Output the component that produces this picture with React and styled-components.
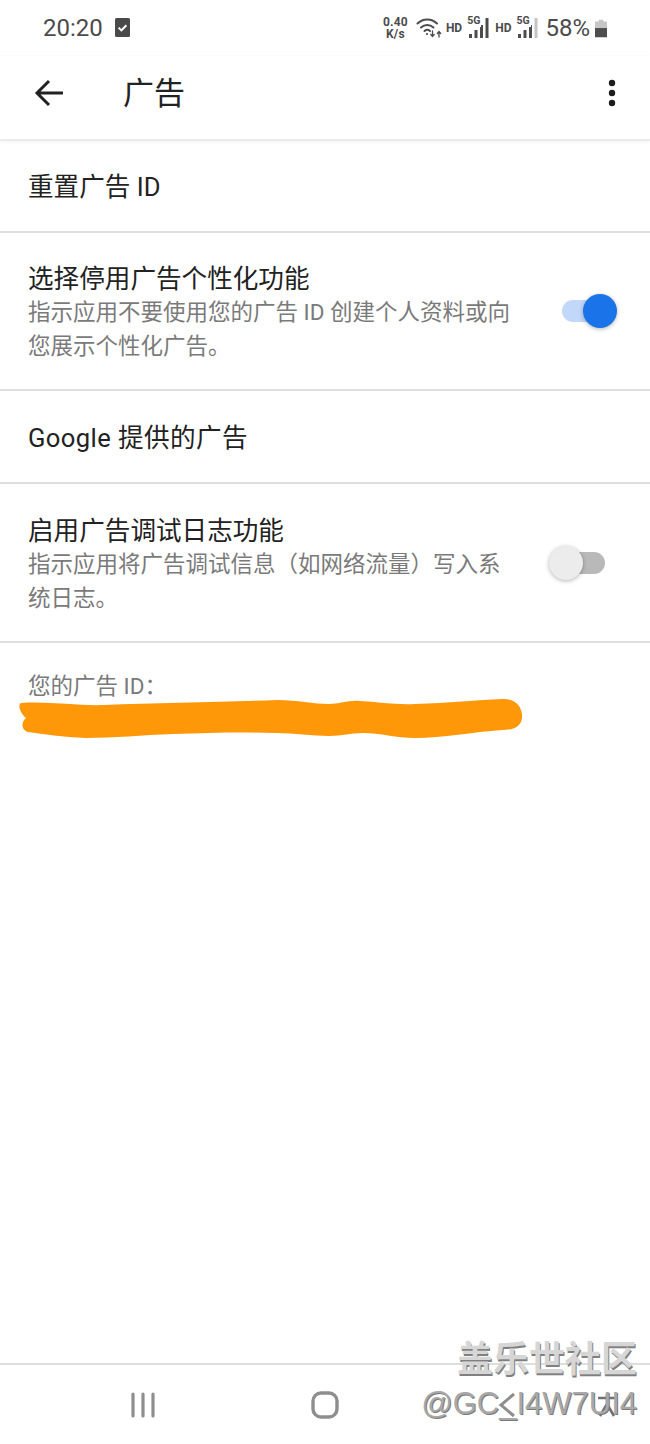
import styled, { createGlobalStyle } from 'styled-components';

const GlobalStyle = createGlobalStyle`
	html, body {
		margin: 0;
		padding: 0;
		background: #fff;
	}
	body {
		font-family: Roboto, "Noto Sans CJK SC", sans-serif;
	}
`;

const rows = [
	{ id: 'reset', title: '重置广告 ID', height: 92 },
	{
		id: 'optout',
		title: '选择停用广告个性化功能',
		desc: ['指示应用不要使用您的广告 ID 创建个人资料或向', '您展示个性化广告。'],
		height: 158,
		toggle: 'on',
	},
	{ id: 'google', title: 'Google 提供的广告', height: 93, spacing: 0.4 },
	{
		id: 'debug',
		title: '启用广告调试日志功能',
		desc: ['指示应用将广告调试信息（如网络流量）写入系', '统日志。'],
		height: 159,
		toggle: 'off',
	},
];

export default function App() {
	return (
		<Page>
			<GlobalStyle />
			<StatusBar>
				<StatusLeft>
					<Clock>20:20</Clock>
					<CheckBadge width="15" height="19" viewBox="0 0 15 19">
						<rect width="15" height="19" rx="1.5" fill="#4a4a4a" />
						<path d="M3.6 9.6l2.8 2.8 5-5.2" fill="none" stroke="#fff" strokeWidth="2" />
					</CheckBadge>
				</StatusLeft>
				<StatusRight>
					<Speed>
						<span>0.40</span>
						<span>K/s</span>
					</Speed>
					<WifiIcon width="27" height="24" viewBox="0 0 27 24" fill="none" stroke="#4c4c4c" strokeLinecap="round">
						<path d="M1.500 7.500C7 2 15.500 2 21 7.500" strokeWidth="2" />
						<path d="M5 11.500c3.700-3.500 8.800-3.500 12.500 0" strokeWidth="2" />
						<path d="M8.500 15c2-1.700 3.500-1.700 5.500 0" strokeWidth="2" />
						<circle cx="11" cy="18" r="1.100" fill="#4c4c4c" stroke="none" />
						<path d="M16.500 15v5M14.800 18.500l1.700 2 1.700-2M23 21v-5M21.300 17.500l1.700-2 1.700 2" strokeWidth="1.300" />
					</WifiIcon>
					<Network>
						<HdLabel>HD</HdLabel>
						<Signal level={4} />
					</Network>
					<Network>
						<HdLabel>HD</HdLabel>
						<Signal level={3} />
					</Network>
					<Battery>58%</Battery>
					<svg width="12" height="19" viewBox="0 0 13 19">
						<path d="M4 0h5v2h4v7H0V2h4z" fill="#c6c6c6" />
						<rect y="9" width="13" height="10" fill="#4d4d4d" />
					</svg>
				</StatusRight>
			</StatusBar>

			<AppBar>
				<svg width="30" height="28" viewBox="0 0 30 28" fill="none" stroke="#222" strokeWidth="3">
					<path d="M29 14H3M15 2L3 14l12 12" />
				</svg>
				<Title>广告</Title>
				<svg width="8" height="28" viewBox="0 0 8 28" fill="#1d1d1d">
					<circle cx="4" cy="4" r="3.200" />
					<circle cx="4" cy="14" r="3.200" />
					<circle cx="4" cy="24" r="3.200" />
				</svg>
			</AppBar>

			<List>
				{rows.map(row => (
					<Row key={row.id} $height={row.height}>
						<RowText $hasDesc={!!row.desc}>
							<RowTitle $spacing={row.spacing}>{row.title}</RowTitle>
							{row.desc && (
								<RowDesc>
									{row.desc.map(line => (
										<span key={line}>{line}</span>
									))}
								</RowDesc>
							)}
						</RowText>
						{row.toggle && (
							<Toggle $on={row.toggle === 'on'}>
								<Knob $on={row.toggle === 'on'} />
							</Toggle>
						)}
					</Row>
				))}
			</List>

			<IdSection>
				<IdLabel>您的广告 ID：</IdLabel>
				<Scribble width="510" height="44" viewBox="0 0 510 44">
					<path
						fill="#ff9808"
						d="M3 5C30 3 60 8 86 7C140 5 210 4 259 2C280 2 295 6 311 6C322 6 330 2 342 3C360 4 378 7 397 6C430 5 460 2 484 1C498 0 505 10 504 20C503 29 495 32 484 32C455 34 425 40 397 40C378 40 362 35 345 35C332 35 325 38 311 38C295 38 275 35 259 35C220 34 190 35 155 36C125 37 95 40 68 40C45 39 25 36 10 34C3 32 3 24 8 20C3 16 -1 7 3 5Z"
					/>
				</Scribble>
			</IdSection>

			<NavBar>
				<svg width="26" height="26" viewBox="0 0 26 26" fill="none" stroke="#8e8e8e" strokeWidth="3.200" strokeLinecap="round">
					<path d="M3 2v22M13 2v22M23 2v22" />
				</svg>
				<svg width="28" height="28" viewBox="0 0 28 28" fill="none" stroke="#8e8e8e" strokeWidth="3.400">
					<rect x="2" y="2" width="24" height="24" rx="8" />
				</svg>
				<svg width="20" height="28" viewBox="0 0 20 28" fill="none" stroke="#8e8e8e" strokeWidth="3">
					<path d="M17 3L4 14l13 11" />
				</svg>
				<svg width="24" height="24" viewBox="0 0 24 24" fill="none" stroke="#707070" strokeWidth="2.600">
					<path d="M12 1v12M3 5h18M12 11L5 23M12 11l7 12" />
				</svg>
			</NavBar>

			<Watermark>
				<WatermarkTitle>盖乐世社区</WatermarkTitle>
				<WatermarkUser>@GC_I4W7UI4</WatermarkUser>
			</Watermark>
		</Page>
	);
}

// thin signal bars with the 5G tag sitting over them
function Signal({ level }) {
	const bars = [4, 8, 13, 20];
	return (
		<SignalWrap>
			<FiveG>5G</FiveG>
			<svg width="22" height="20" viewBox="0 0 22 20">
				{bars.map((h, i) => (
					<rect
						key={h}
						x={i * 5.5 + 2}
						y={20 - h}
						width="3"
						height={h}
						fill={i < level ? '#4c4c4c' : '#c4c4c4'}
					/>
				))}
			</svg>
		</SignalWrap>
	);
}

const Page = styled.div`
	position: relative;
	width: 650px;
	height: 1444px;
	overflow: hidden;
	background: #fff;
	display: flex;
	flex-direction: column;
`;

const StatusBar = styled.div`
	height: 56px;
	padding: 0 43px;
	display: flex;
	align-items: center;
	justify-content: space-between;
	color: #4b4b4b;
`;

const StatusLeft = styled.div`
	display: flex;
	align-items: center;
	gap: 12px;
`;

const CheckBadge = styled.svg`
	margin-top: -2px;
`;

const Clock = styled.span`
	font-size: 24px;
	line-height: 1;
`;

const StatusRight = styled.div`
	display: flex;
	align-items: center;
	gap: 5px;
`;

const Speed = styled.div`
	display: flex;
	flex-direction: column;
	align-items: center;
	font-size: 12px;
	font-weight: 700;
	letter-spacing: 0.2px;
	line-height: 12px;
	margin-right: 3px;
`;

const WifiIcon = styled.svg`
	margin-right: -3px;
`;

const Network = styled.div`
	display: flex;
	align-items: center;
	gap: 5px;
	margin-left: 1px;
`;

const HdLabel = styled.span`
	font-size: 12px;
	font-weight: 700;
`;

const SignalWrap = styled.div`
	position: relative;
	width: 22px;
	height: 20px;
`;

const FiveG = styled.span`
	position: absolute;
	top: -2px;
	left: 0;
	font-size: 10.500px;
	font-weight: 700;
	line-height: 1;
	background: #fff;
	padding-right: 1px;
`;

const Battery = styled.span`
	font-size: 24px;
	line-height: 1;
	margin-left: 2px;
`;

const AppBar = styled.div`
	height: 85px;
	padding: 0 34px 9px;
	display: flex;
	align-items: center;
	box-sizing: border-box;
	border-bottom: 2px solid #ececec;
	box-shadow: 0 1px 3px rgba(0, 0, 0, 0.06);
`;

const Title = styled.h1`
	flex: 1;
	margin: 0 0 0 59px;
	font-size: 31px;
	font-weight: 400;
	line-height: 1;
	color: #222;
`;

const List = styled.div`
	display: flex;
	flex-direction: column;
`;

const Row = styled.div`
	height: ${p => p.$height}px;
	box-sizing: border-box;
	padding: 0 32px 0 28px;
	display: flex;
	align-items: center;
	justify-content: space-between;
	border-bottom: 2px solid #dfdfdf;
`;

const RowText = styled.div`
	display: flex;
	flex-direction: column;
	padding-top: ${p => (p.$hasDesc ? '4px' : '2px')};
`;

const RowTitle = styled.div`
	font-size: 25.600px;
	line-height: 32px;
	color: #222;
	letter-spacing: ${p => p.$spacing || 0}px;
`;

const RowDesc = styled.div`
	display: flex;
	flex-direction: column;
	font-size: 22.500px;
	line-height: 34px;
	color: #7a7a7a;
`;

const Toggle = styled.div`
	position: relative;
	flex: none;
	width: 46px;
	height: 22px;
	border-radius: 11px;
	margin-right: ${p => (p.$on ? '10px' : '13px')};
	background: ${p => (p.$on ? '#c1d8fa' : '#b9b9b9')};
`;

const Knob = styled.div`
	position: absolute;
	top: -6px;
	left: ${p => (p.$on ? '21px' : '-10px')};
	width: 34px;
	height: 34px;
	border-radius: 50%;
	background: ${p => (p.$on ? '#1a73e8' : '#ececec')};
	box-shadow: 0 1px 4px rgba(0, 0, 0, 0.3);
`;

const IdSection = styled.div`
	padding: 27px 0 0 18px;
	display: flex;
	flex-direction: column;
`;

const IdLabel = styled.div`
	margin-left: 10px;
	font-size: 22.500px;
	line-height: 32px;
	color: #7a7a7a;
`;

const Scribble = styled.svg`
	margin-top: -4px;
`;

const NavBar = styled.div`
	margin-top: auto;
	height: 81px;
	box-sizing: border-box;
	border-top: 2px solid #dedede;
	padding-left: 130px;
	display: grid;
	grid-template-columns: 181px 186px 98px auto;
	align-items: center;
`;

const Watermark = styled.div`
	position: absolute;
	right: 13px;
	bottom: 22px;
	display: flex;
	flex-direction: column;
	align-items: flex-end;
`;

const WatermarkTitle = styled.div`
	font-size: 36px;
	font-weight: 700;
	line-height: 46px;
	margin-bottom: 3px;
	color: #d6d6d6;
	text-shadow: 1px 2px 0 #808080;
`;

const WatermarkUser = styled.div`
	font-family: "Liberation Sans", sans-serif;
	font-size: 31px;
	line-height: 36px;
	color: #a8a8a8;
	text-shadow: 1px 1px 0 #7a7a7a;
`;
